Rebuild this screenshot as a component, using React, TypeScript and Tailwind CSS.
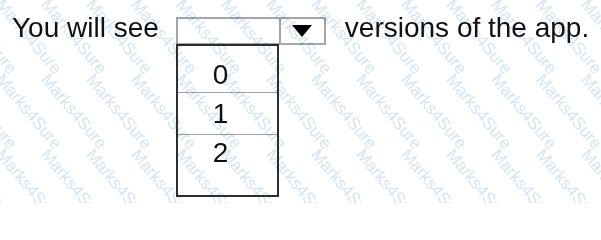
import React from 'react'

const font = "font-['Liberation_Sans',Arial,sans-serif]"

// watermark grid: 45px across, 75px down
const marks: { x: number; y: number }[] = []
for (let r = -1; r < 4; r++) {
  for (let c = -3; c < 14; c++) {
    marks.push({ x: 6 + c * 45, y: -4 + r * 75 })
  }
}

function Watermark() {
  return (
    <div className="absolute inset-0 pointer-events-none mix-blend-multiply overflow-hidden">
      {marks.map((m, i) => (
        <span
          key={i}
          className={`absolute origin-top-left rotate-[50deg] whitespace-nowrap text-[17px] leading-none text-[#d6e5f1] ${font}`}
          style={{ left: m.x, top: m.y }}
        >
          Marks4Sure
        </span>
      ))}
    </div>
  )
}

function Dropdown() {
  return (
    <div className="flex flex-col mt-[3px]">
      {/* closed select */}
      <div className="flex w-[150px] h-[28px] border-2 border-[#a6a6a6] bg-white">
        <div className="w-[103px] border-r-2 border-[#a6a6a6]"></div>
        <div className="flex-1 flex items-center justify-center">
          <svg width="20" height="12" viewBox="0 0 20 12">
            <polygon points="0,0 20,0 10,12" fill="#000" />
          </svg>
        </div>
      </div>

      {/* opened list */}
      <div className="flex flex-col w-[103px] h-[153px] -mt-[1px] border-2 border-[#2e2e2e] bg-white text-[28px] leading-[28px] text-[#111]">
        <div className="h-[47px] border-b border-[#a0a0a0] pt-[15px] pl-[35px]">0</div>
        <div className="h-[42px] border-b border-[#a0a0a0] pt-[7px] pl-[35px]">1</div>
        <div className="flex-1 pt-[4px] pl-[35px]">2</div>
      </div>
    </div>
  )
}

export default function App() {
  return (
    <div className={`relative w-[601px] h-[203px] overflow-hidden bg-white ${font}`}>
      <div className="flex items-start pt-[14px] pl-[12px] text-[28px] leading-[28px] text-[#111]">
        <span className="whitespace-nowrap">You will see</span>
        <div className="ml-[17px]">
          <Dropdown />
        </div>
        <span className="ml-[19px] whitespace-nowrap">versions of the app.</span>
      </div>
      <Watermark />
    </div>
  )
}
